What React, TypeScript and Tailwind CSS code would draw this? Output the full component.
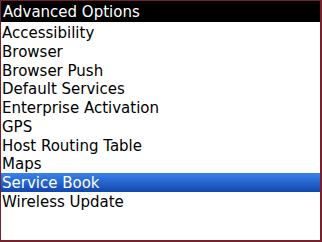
const items = [
  "Accessibility",
  "Browser",
  "Browser Push",
  "Default Services",
  "Enterprise Activation",
  "GPS",
  "Host Routing Table",
  "Maps",
  "Service Book",
  "Wireless Update",
];

const selected = "Service Book";

export default function App() {
  return (
    <div className="flex h-[242px] w-[322px] flex-col border-t border-l border-r-2 border-b-2 border-[#7b1f2e] bg-white font-['DejaVu_Sans',sans-serif] text-[15px]">
      <div className="h-[21px] bg-black pl-[2px] pt-[1px] leading-[20px] text-white">Advanced Options</div>
      <ul className="pt-[1px]">
        {items.map((item) =>
          item === selected ? (
            <li
              key={item}
              className="h-[18.75px] bg-gradient-to-b from-[#3a84ec] to-[#1246ad] pl-[1px] pt-[1px] leading-[18px] text-white"
            >
              {item}
            </li>
          ) : (
            <li key={item} className="h-[18.75px] pl-[1px] pt-[1px] leading-[18px] text-black">
              {item}
            </li>
          )
        )}
      </ul>
    </div>
  );
}
